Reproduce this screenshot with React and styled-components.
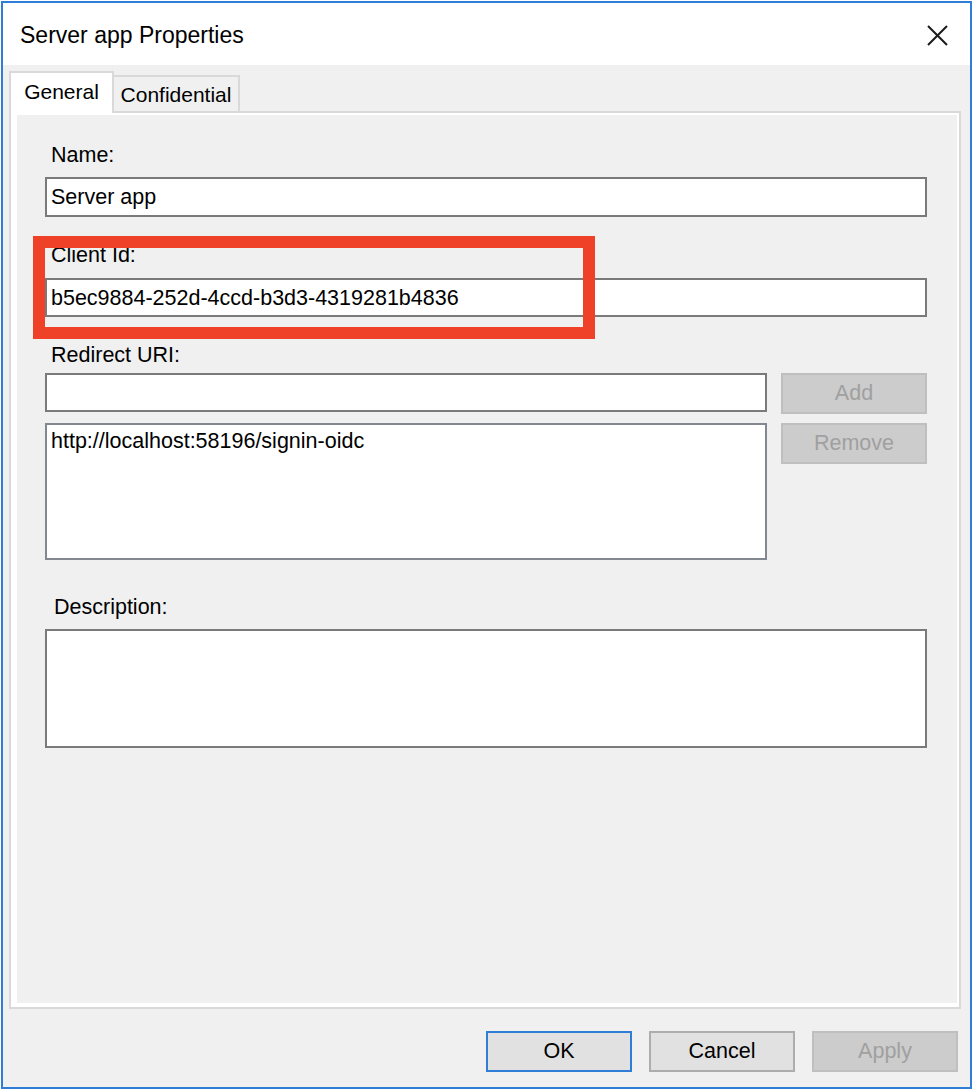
import React from 'react'
import styled, { createGlobalStyle } from 'styled-components'

const Global = createGlobalStyle`
  html, body {
    margin: 0;
    background: #ffffff;
  }
  body {
    font-family: 'Liberation Sans', Arial, sans-serif;
    color: #000000;
  }
  * { box-sizing: border-box; }
`

export default function App() {
  return (
    <>
      <Global />
      <Window>
        <TitleBar>
          <Title>Server app Properties</Title>
          <Close aria-label="Close">
            <svg width="21" height="21" viewBox="0 0 21 21">
              <path d="M1 1 L20 20 M20 1 L1 20" stroke="#1b1b1b" strokeWidth="2" fill="none" />
            </svg>
          </Close>
        </TitleBar>
        <Body>
          <Tabs>
            <Tab $active $w={105}>General</Tab>
            <Tab $w={126}>Confidential</Tab>
          </Tabs>
          <Panel>
            <Content>
              <Label $top={28}>Name:</Label>
              <TextBox $top={10} $h={40}>Server app</TextBox>

              <Group $top={26}>
                <Label>Client Id:</Label>
                <TextBox $top={11} $h={39}>b5ec9884-252d-4ccd-b3d3-4319281b4836</TextBox>
                <Highlight />
              </Group>

              <Label $top={26}>Redirect URI:</Label>
              <Row $top={6}>
                <TextBox $h={39} $grow />
                <SideButton disabled>Add</SideButton>
              </Row>
              <Row $top={9}>
                <ListBox>
                  <ListItem>http://localhost:58196/signin-oidc</ListItem>
                </ListBox>
                <SideButton disabled>Remove</SideButton>
              </Row>

              <Label $top={34.5} $left={9}>Description:</Label>
              <TextBox $top={10.5} $h={119} />
            </Content>
          </Panel>
          <Footer>
            <DialogButton $primary>OK</DialogButton>
            <DialogButton>Cancel</DialogButton>
            <DialogButton disabled>Apply</DialogButton>
          </Footer>
        </Body>
      </Window>
    </>
  )
}

const Window = styled.div`
  width: 971px;
  height: 1088px;
  margin: 1px;
  border: 2px solid #2f7dd7;
  display: flex;
  flex-direction: column;
  background: #f0f0f0;
`

const TitleBar = styled.div`
  height: 62px;
  flex: none;
  background: #ffffff;
  display: flex;
  align-items: center;
  justify-content: space-between;
  padding: 0 22px 0 17px;
`

const Title = styled.div`
  font-size: 23px;
  line-height: 28px;
  margin-top: 2px;
  color: #000000;
`

const Close = styled.div`
  width: 21px;
  height: 21px;
  display: flex;
  margin-top: 3px;
`

const Body = styled.div`
  flex: 1;
  display: flex;
  flex-direction: column;
  padding: 6px 9px 0 6px;
`

const Tabs = styled.div`
  height: 40px;
  display: flex;
  align-items: flex-end;
`

const Tab = styled.div`
  width: ${p => p.$w}px;
  height: ${p => (p.$active ? 42 : 36)}px;
  margin-bottom: ${p => (p.$active ? -2 : 0)}px;
  position: relative;
  z-index: ${p => (p.$active ? 2 : 0)};
  background: ${p => (p.$active ? '#ffffff' : '#f0f0f0')};
  border: 2px solid #d9d9d9;
  border-bottom: none;
  border-left-width: ${p => (p.$active ? 2 : 0)}px;
  font-size: 21px;
  line-height: 24px;
  text-align: center;
  padding-top: ${p => (p.$active ? 7 : 6)}px;
  color: #000000;
`

const Panel = styled.div`
  height: 898px;
  flex: none;
  border: 2px solid #d9d9d9;
  position: relative;
  z-index: 1;
`

const Content = styled.div`
  height: 100%;
  background: #f0f0f0;
  border-style: solid;
  border-color: #ffffff;
  border-width: 2px 2px 4px 6px;
  padding: 0 30px 0 28px;
  display: flex;
  flex-direction: column;
`

const Label = styled.div`
  font-size: 21.5px;
  line-height: 24px;
  margin-top: ${p => p.$top || 0}px;
  margin-left: ${p => (p.$left ?? 6)}px;
  color: #000000;
  position: relative;
  z-index: 0;
`

const TextBox = styled.div`
  height: ${p => p.$h}px;
  margin-top: ${p => p.$top || 0}px;
  flex: ${p => (p.$grow ? 1 : 'none')};
  background: #ffffff;
  border: 2px solid #7a7a7a;
  padding: 6px 4px 0;
  font-size: 21.5px;
  line-height: 24px;
  white-space: nowrap;
  overflow: hidden;
`

const Group = styled.div`
  position: relative;
  display: flex;
  flex-direction: column;
  margin-top: ${p => p.$top}px;
`

const Highlight = styled.div`
  position: absolute;
  left: -12px;
  top: -7px;
  width: 562px;
  height: 103px;
  border: 12px solid #ee4128;
  pointer-events: none;
`

const Row = styled.div`
  display: flex;
  align-items: flex-start;
  gap: 14px;
  margin-top: ${p => p.$top}px;
`

const ListBox = styled.div`
  flex: 1;
  height: 137px;
  background: #ffffff;
  border: 2px solid #828790;
  padding: 4px 4px 0;
`

const ListItem = styled.div`
  font-size: 21.5px;
  line-height: 24px;
  white-space: nowrap;
`

const SideButton = styled.button`
  width: 146px;
  height: 41px;
  flex: none;
  background: #cccccc;
  border: 2px solid #bfbfbf;
  color: #a0a0a0;
  font-family: 'Liberation Sans', Arial, sans-serif;
  font-size: 21.5px;
  padding: 0;
`

const Footer = styled.div`
  flex: 1;
  display: flex;
  justify-content: flex-end;
  align-items: flex-start;
  gap: 17px;
  padding: 22px 3px 0 0;
`

const DialogButton = styled.button`
  width: 146px;
  height: 41px;
  padding: 0;
  font-family: 'Liberation Sans', Arial, sans-serif;
  font-size: 21.5px;
  background: ${p => (p.disabled ? '#cccccc' : '#e1e1e1')};
  border: 2px solid ${p => (p.$primary ? '#2f7dd7' : p.disabled ? '#bfbfbf' : '#adadad')};
  color: ${p => (p.disabled ? '#a0a0a0' : '#000000')};
`
